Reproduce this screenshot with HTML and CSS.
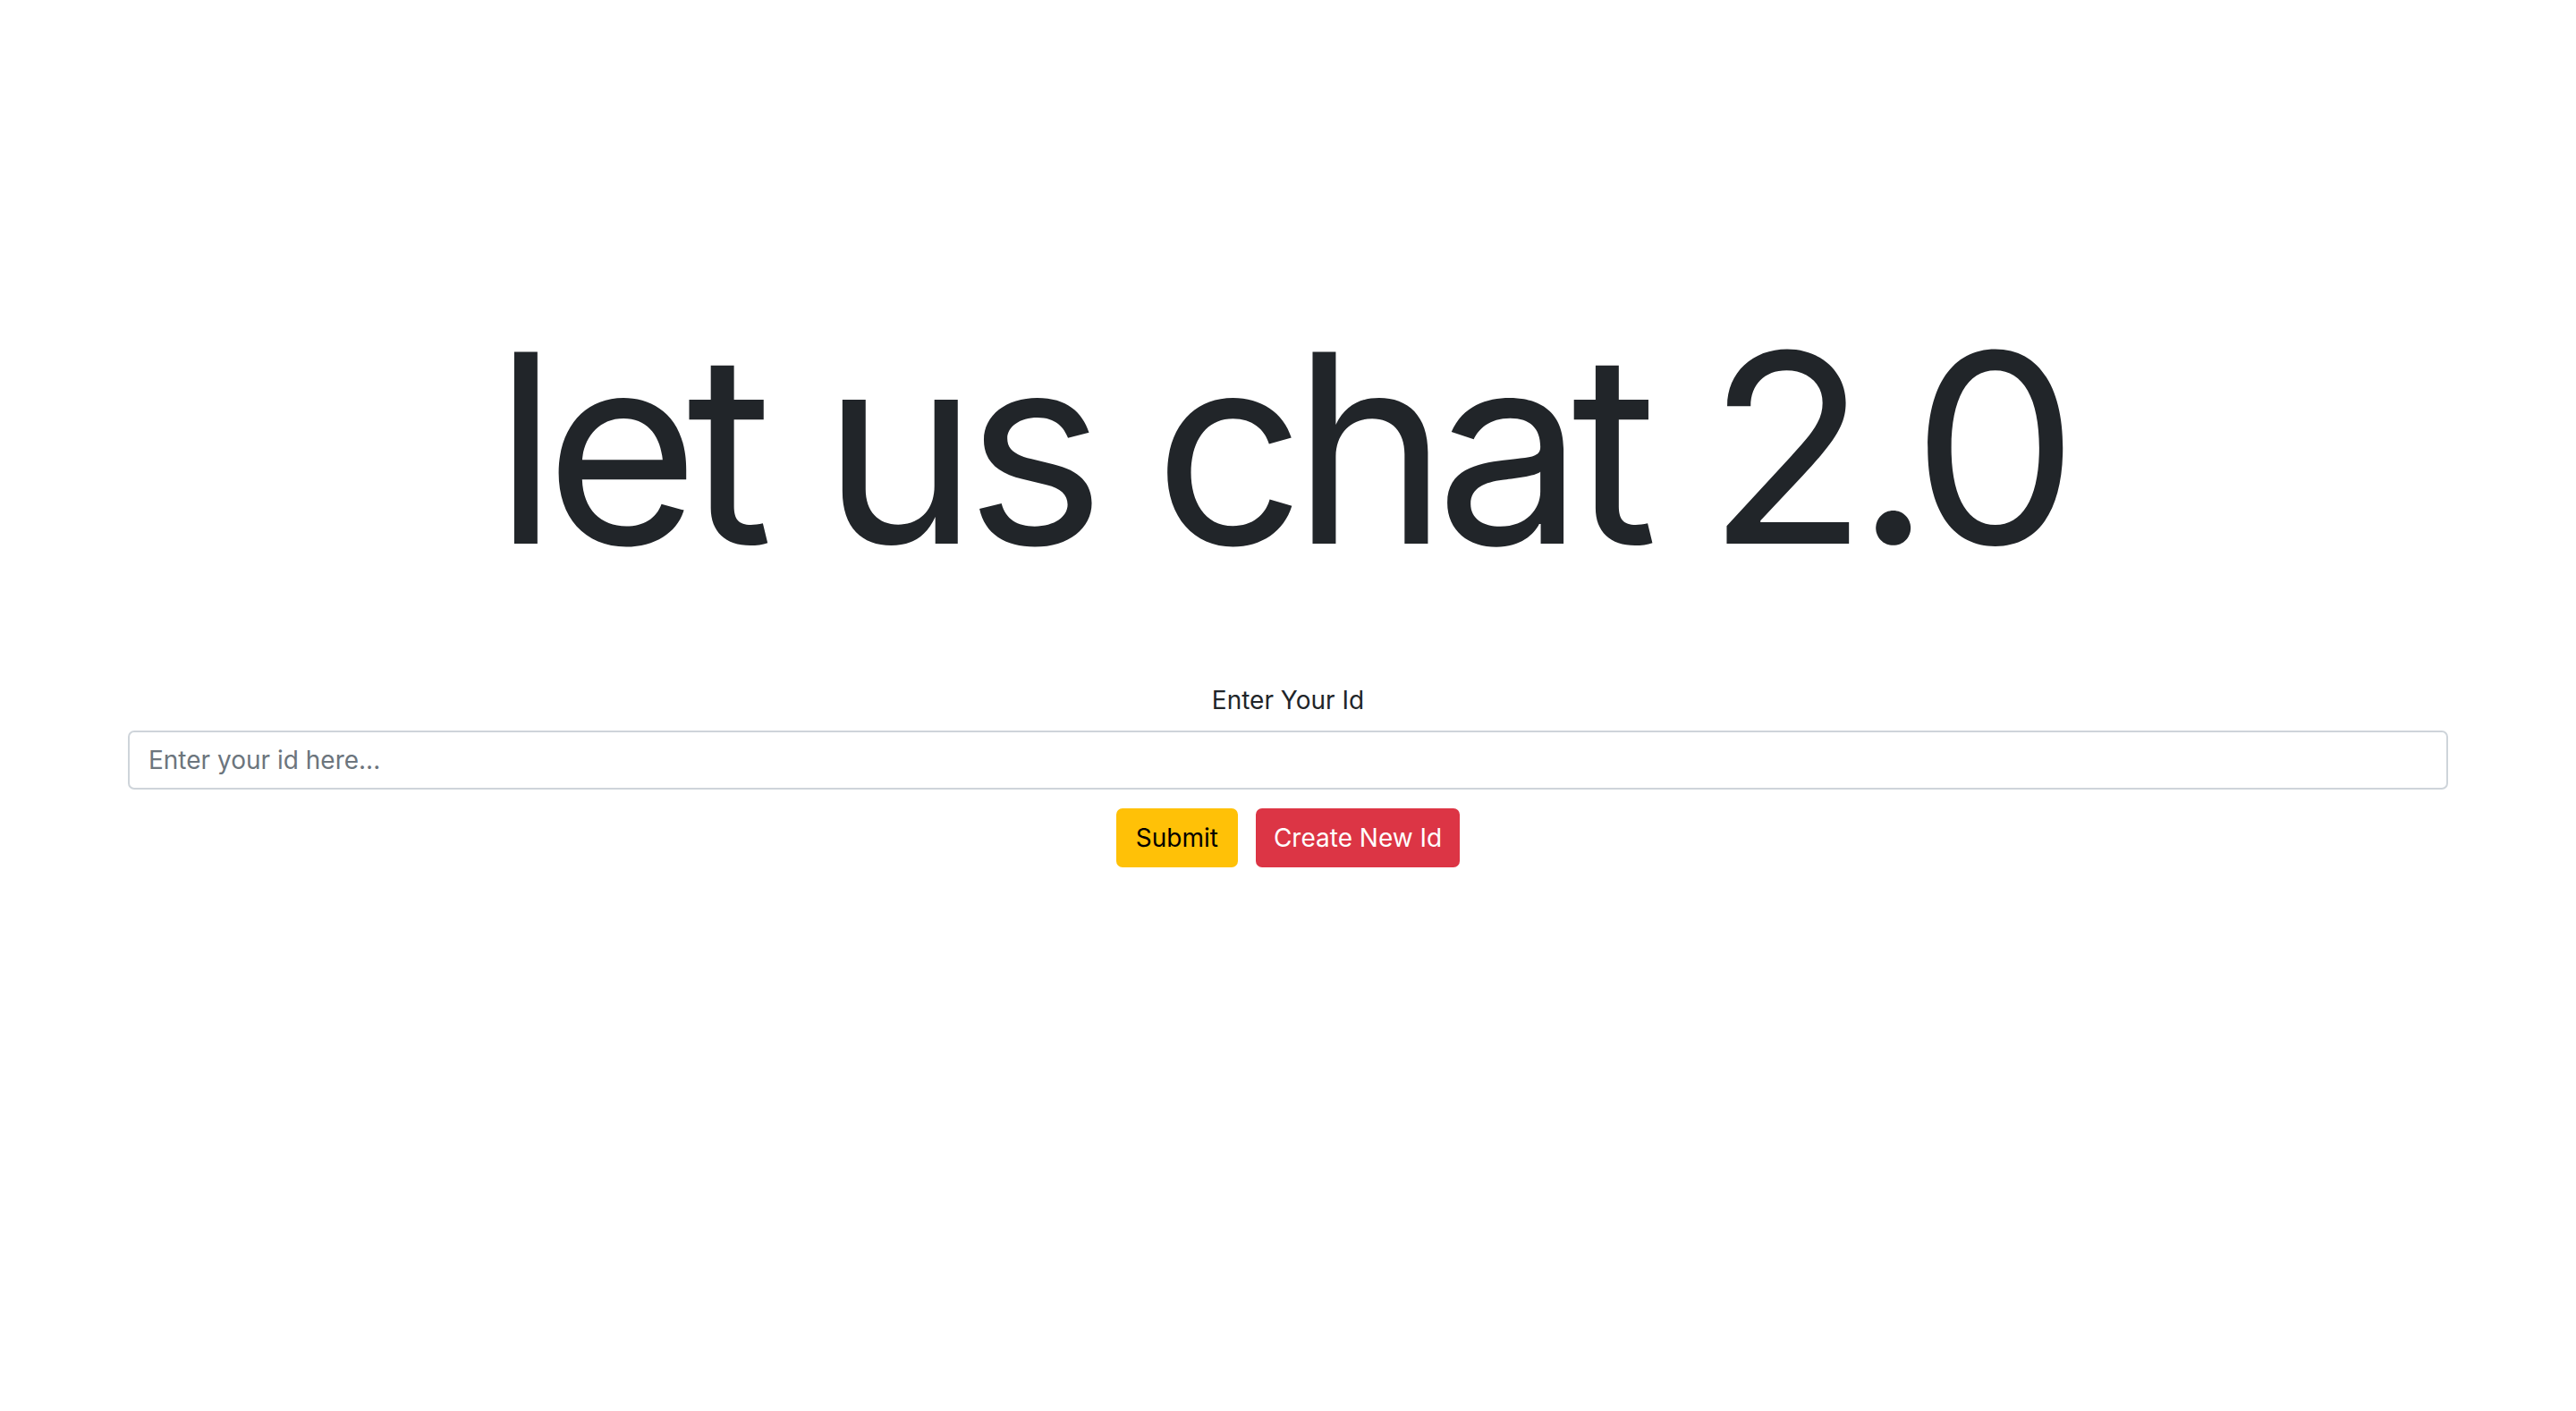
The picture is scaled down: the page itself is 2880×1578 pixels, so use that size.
FILE: index.html
```html
<!DOCTYPE html>
<html lang="en">
<head>
<meta charset="utf-8">
<title>let us chat 2.0</title>
<link rel="stylesheet" href="styles.css">
</head>
<body>
<main class="page">
  <h1 class="title">let us chat 2.0</h1>
  <form class="id-form">
    <label class="id-label" for="userId">Enter Your Id</label>
    <input class="id-input" id="userId" type="text" placeholder="Enter your id here...">
    <div class="actions">
      <button type="button" class="btn btn-warning">Submit</button>
      <button type="button" class="btn btn-danger">Create New Id</button>
    </div>
  </form>
</main>
</body>
</html>
```
FILE: styles.css
```css
* { box-sizing: border-box; }
html, body {
  margin: 0;
  padding: 0;
  background: #ffffff;
}
body {
  font-family: Inter, "Noto Sans", "Liberation Sans", sans-serif;
  font-size: 28px;
  line-height: 1.5;
  color: #212529;
}
.page {
  padding-top: 324px;
}
.title {
  margin: 0;
  padding-right: 18px;
  font-size: 295px;
  font-weight: 400;
  line-height: 1.2;
  letter-spacing: -14px;
  text-align: center;
  color: #212529;
}
.id-form {
  width: calc(100% - 286px);
  margin: 84px auto 0;
}
.id-label {
  display: block;
  text-align: center;
  margin-bottom: 13px;
}
.id-input {
  display: block;
  width: 100%;
  font-family: inherit;
  font-size: 28px;
  line-height: 1.5;
  padding: 10px 21px;
  color: #212529;
  background: #fff;
  border: 2px solid #ced4da;
  border-radius: 7px;
  outline: none;
}
.id-input::placeholder {
  color: #6c757d;
  opacity: 1;
}
.actions {
  display: flex;
  justify-content: center;
  gap: 20px;
  margin-top: 21px;
}
.btn {
  font-family: inherit;
  font-size: 28px;
  line-height: 1.5;
  padding: 10px 20px;
  border: 2px solid transparent;
  border-radius: 7px;
  cursor: pointer;
}
.btn-danger {
  padding: 10px 18px;
}
.btn-warning {
  background: #ffc107;
  border-color: #ffc107;
  color: #000000;
}
.btn-danger {
  background: #dc3545;
  border-color: #dc3545;
  color: #ffffff;
}
```
